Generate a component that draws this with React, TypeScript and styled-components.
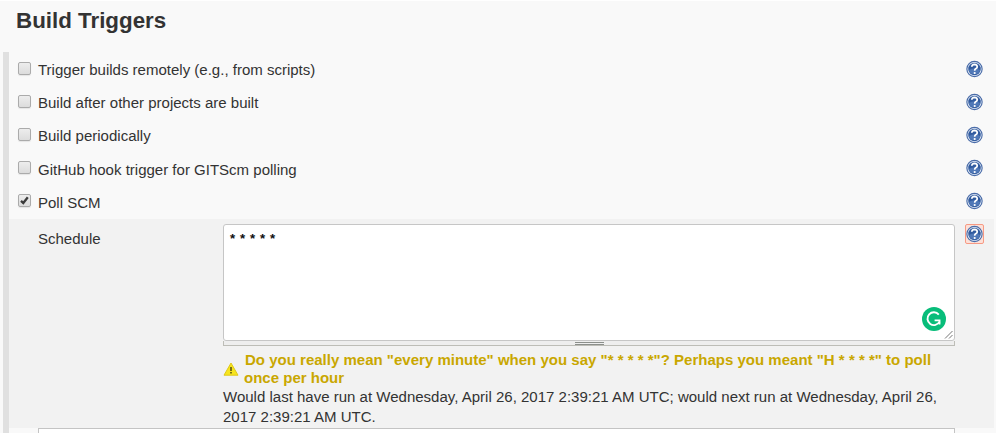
import React from "react";
import styled, { createGlobalStyle } from "styled-components";

const GlobalStyle = createGlobalStyle`
  * { box-sizing: border-box; }
  body { margin: 0; background: #fff; }
`;

const Page = styled.main`
  width: 996px;
  height: 433px;
  overflow: hidden;
  border-top: 1px solid #fff;
  background: #f9f9f9;
  color: #333;
  font: 15.03px/19px "Liberation Sans", Arial, sans-serif;
  white-space: nowrap;
`;

const Title = styled.h2`
  height: 51px;
  margin: 0;
  padding: 7px 0 0 16px;
  font-size: 22.35px;
  line-height: 26px;
  font-weight: bold;
`;

const Section = styled.section`
  width: 991px;
  height: 381px;
  margin-left: 3px;
  border-left: 6px solid #e0e0e0;
`;

const TriggerRow = styled.div`
  display: flex;
  align-items: center;
  height: 33.2px;
  padding: 0 10px 0 9px;
`;

const TriggerLabel = styled.label`
  display: flex;
  flex: 1;
  align-items: center;
  padding-top: 2px;
`;

const CheckBox = styled.span`
  display: flex;
  width: 13px;
  height: 13px;
  margin: -3px 7px 0 0;
  border: 1px solid #ababab;
  border-radius: 2px;
  background: linear-gradient(#ededed, #dcdcdc);
  box-shadow: 0 1px 1px #00000014;
`;

const HelpButton = styled.span<{ $focused?: boolean }>`
  display: flex;
  align-items: center;
  justify-content: center;
  flex: none;
  width: 19px;
  height: 20px;
  border: 1px solid ${(p) => (p.$focused ? "#f79a84" : "transparent")};
  border-radius: 2px;
  background: ${(p) => (p.$focused ? "#fce0d8" : "transparent")};
`;

const SchedulePanel = styled.div`
  display: flex;
  align-items: flex-start;
  width: 985px;
  height: 209px;
  margin-top: 1px;
  padding: 5px 9px 0 29px;
  background: #f2f2f2;
`;

const FieldName = styled.div`
  width: 185px;
  padding-top: 5px;
`;

const Field = styled.div`
  width: 732px;
  margin-right: 10px;
`;

const TextBox = styled.div`
  position: relative;
  height: 117px;
  padding: 4px 6px;
  border: 1px solid #c6c6c6;
  border-radius: 3px;
  background: #fff;
  color: #111;
  font-size: 13.3px;
  font-weight: bold;
  word-spacing: 1.13px;
`;

const AssistantBadge = styled.span`
  position: absolute;
  right: 8px;
  bottom: 9px;
  display: flex;
`;

const Corner = styled.span`
  position: absolute;
  right: 1px;
  bottom: 1px;
  display: flex;
`;

const ResizeBar = styled.div`
  display: flex;
  justify-content: center;
  height: 5px;
  border: solid #bdbdb7;
  border-width: 0 1px 1px;
  background: #eee;
`;

const Grip = styled.span`
  width: 29px;
  height: 3px;
  margin-top: 1px;
  border: solid #8b8f8b;
  border-width: 1px 0;
`;

const Warning = styled.div`
  display: flex;
  align-items: center;
  margin-top: 5px;
  color: #c9a700;
  font-weight: bold;
  line-height: 18.5px;
`;

const WarningText = styled.div`
  margin-left: 5px;
`;

const FirstLine = styled.span`
  margin-left: 1px;
`;

const RunTimes = styled.div`
  line-height: 20px;
  margin-top: -1px;
`;

const NextBox = styled.div`
  width: 917px;
  height: 20px;
  margin-left: 29px;
  border: 1px solid #c4c4c4;
  background: #fff;
`;

const HelpIcon = () => (
  <svg width="18" height="18" viewBox="0 0 18 18">
    <circle cx="9" cy="9" r="8.1" fill="#e7eef8" stroke="#4a6ca8" strokeWidth="1.2" />
    <circle cx="9" cy="9" r="6.6" fill="#315b9f" />
    <path d="M3 10A6.2 6.2 0 0 0 15 10Q9 7 3 10Z" fill="#5078b7" />
    <path d="M6.1 6.7Q6.2 4.2 9 4.1Q11.9 4.2 11.9 6.7Q11.8 7.9 10.2 8.8Q9.2 9.4 9.2 10.9" fill="none" stroke="#fff" strokeWidth="1.8" />
    <circle cx="9.2" cy="13.2" r="1.15" fill="#fff" />
  </svg>
);

const Help = ({ focused = false }: { focused?: boolean }) => (
  <HelpButton $focused={focused}>
    <HelpIcon />
  </HelpButton>
);

const CheckMark = () => (
  <svg width="11" height="11" viewBox="0 0 11 11">
    <path d="M2 5.8 4.3 8 8.8 2.3" fill="none" stroke="#3b3b3b" strokeWidth="2.3" />
  </svg>
);

const triggers = [
  { label: "Trigger builds remotely (e.g., from scripts)", checked: false },
  { label: "Build after other projects are built", checked: false },
  { label: "Build periodically", checked: false },
  { label: "GitHub hook trigger for GITScm polling", checked: false },
  { label: "Poll SCM", checked: true },
];

export default function App() {
  return (
    <>
      <GlobalStyle />
      <Page>
        <Title>Build Triggers</Title>
        <Section>
          {triggers.map(({ label, checked }) => (
            <TriggerRow key={label}>
              <TriggerLabel>
                <CheckBox role="checkbox" aria-checked={checked}>
                  {checked && <CheckMark />}
                </CheckBox>
                {label}
              </TriggerLabel>
              <Help />
            </TriggerRow>
          ))}
          <SchedulePanel>
            <FieldName>Schedule</FieldName>
            <Field>
              <TextBox>
                * * * * *
                <AssistantBadge>
                  <svg width="24" height="24" viewBox="0 0 24 24">
                    <circle cx="12" cy="12" r="12" fill="#08bd7a" />
                    <path d="M16.8 7.6A6.4 6.4 0 1 0 17.6 14.6" fill="none" stroke="#fff" strokeWidth="1.9" />
                    <path d="M12.6 13.4H17.6V17.4" fill="none" stroke="#fff" strokeWidth="1.7" />
                  </svg>
                </AssistantBadge>
                <Corner>
                  <svg width="9" height="9" viewBox="0 0 9 9">
                    <path d="M1 8.5 8.5 1M5 8.5 8.5 5" stroke="#777" />
                  </svg>
                </Corner>
              </TextBox>
              <ResizeBar>
                <Grip />
              </ResizeBar>
              <Warning>
                <svg width="16" height="16" viewBox="0 0 16 16">
                  <path d="M8 2 15 14.2H1Z" fill="#f7e51d" stroke="#dfc819" strokeLinejoin="round" />
                  <path d="M8 6V10M8 11V12.5" stroke="#514a16" strokeWidth="1.5" />
                </svg>
                <WarningText>
                  <FirstLine>Do you really mean "every minute" when you say "* * * * *"? Perhaps you meant "H * * * *" to poll</FirstLine>
                  <br />
                  once per hour
                </WarningText>
              </Warning>
              <RunTimes>
                Would last have run at Wednesday, April 26, 2017 2:39:21 AM UTC; would next run at Wednesday, April 26,
                <br />
                2017 2:39:21 AM UTC.
              </RunTimes>
            </Field>
            <Help focused />
          </SchedulePanel>
          <NextBox />
        </Section>
      </Page>
    </>
  );
}
